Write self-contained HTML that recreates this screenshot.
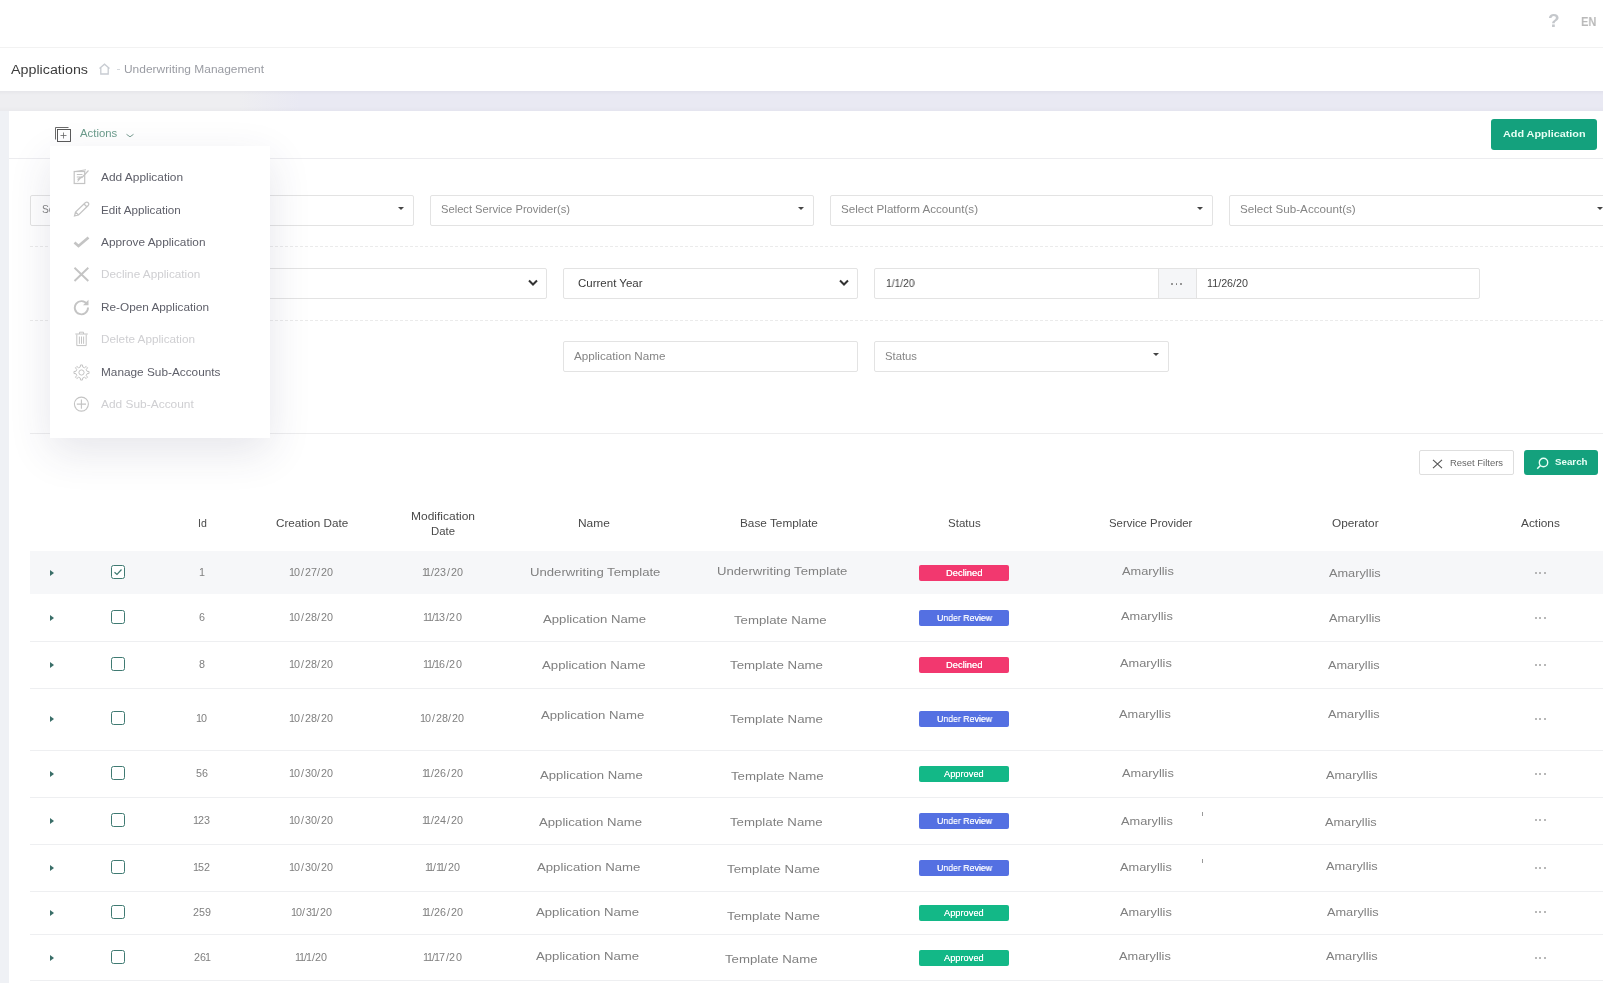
<!DOCTYPE html>
<html><head><meta charset="utf-8"><style>
html,body{margin:0;padding:0;}
body{width:1603px;height:983px;overflow:hidden;position:relative;background:#fff;font-family:"Liberation Sans",sans-serif;}
.t{position:absolute;white-space:nowrap;will-change:transform;}
</style></head><body>
<div style="position:absolute;left:0px;top:91px;width:1603px;height:892px;background:#eff1f5"></div>
<div style="position:absolute;left:0px;top:91px;width:1603px;height:20px;background:linear-gradient(to right,#eeeef1 0,#eeeef1 240px,#e9e9f3 300px,#e9e9f3 100%)"></div>
<div style="position:absolute;left:0px;top:91px;width:1603px;height:20px;background:linear-gradient(rgba(0,0,40,0.035),rgba(0,0,0,0) 20%,rgba(0,0,0,0) 75%,rgba(0,0,30,0.02))"></div>
<div style="position:absolute;left:0px;top:47px;width:1603px;height:1px;background:#f2f2f2"></div>
<div style="position:absolute;left:9px;top:111px;width:1594px;height:872px;background:#fff"></div>
<div class="t" style="left:1548.00px;top:9.41px;font-size:19px;line-height:23px;letter-spacing:0.000px;color:#c5c8cc;font-weight:bold;">?</div>
<div class="t" style="left:1580.80px;top:13.98px;font-size:12.75px;line-height:15px;letter-spacing:0.000px;color:#b9b9b9;font-weight:bold;transform:scaleX(0.8638);transform-origin:0 0;">EN</div>
<div class="t" style="left:11.40px;top:63.37px;font-size:12.5px;line-height:15px;letter-spacing:0.000px;color:#3c3c3c;font-weight:normal;transform:scaleX(1.1425);transform-origin:0 0;">Applications</div>
<svg style="position:absolute;left:98px;top:63px" width="13" height="12" viewBox="0 0 13 12"><path d="M1.5 5.5 L6.5 1.2 L11.5 5.5 M2.8 4.6 V11 H10.2 V4.6" fill="none" stroke="#c8ccd2" stroke-width="1.3"/></svg>
<div style="position:absolute;left:116.5px;top:69px;width:3px;height:1.2px;background:#d5d8dc"></div>
<div class="t" style="left:123.70px;top:64.05px;font-size:10.25px;line-height:12px;letter-spacing:0.000px;color:#9a9ca3;font-weight:normal;transform:scaleX(1.1646);transform-origin:0 0;">Underwriting Management</div>
<div style="position:absolute;left:9px;top:158px;width:1594px;height:1px;background:#ececef"></div>
<svg style="position:absolute;left:54px;top:126px" width="18" height="17" viewBox="0 0 18 17"><path d="M1.5 13.5 V1.5 H14.5" fill="none" stroke="#5a5a5a" stroke-width="0.9"/><rect x="3.5" y="3.5" width="13" height="12" fill="none" stroke="#4a4a4a" stroke-width="0.9"/><path d="M9.5 6.5 V12.5 M6.5 9.5 H12.5" stroke="#666" stroke-width="0.8"/></svg>
<div class="t" style="left:80.30px;top:128.25px;font-size:10.25px;line-height:12px;letter-spacing:0.000px;color:#6c9c8c;font-weight:normal;transform:scaleX(1.1068);transform-origin:0 0;">Actions</div>
<svg style="position:absolute;left:125px;top:132px" width="10" height="7" viewBox="0 0 10 7"><path d="M1.5 2.3 L5 4.8 L8.5 2.3" fill="none" stroke="#7a9e92" stroke-width="1"/></svg>
<div style="position:absolute;left:1491px;top:119px;width:106px;height:31px;background:#14a17d;border-radius:3px"></div>
<div class="t" style="left:1503.00px;top:128.22px;font-size:9.75px;line-height:12px;letter-spacing:0.000px;color:#e9fff6;font-weight:bold;transform:scaleX(1.1091);transform-origin:0 0;">Add Application</div>
<div style="position:absolute;left:30px;top:195px;width:384px;height:31px;box-sizing:border-box;border:1px solid #e3e3e3;border-radius:2px;background:#fff"></div>
<div class="t" style="left:41.50px;top:204.45px;font-size:10.25px;line-height:12px;letter-spacing:0.000px;color:#858585;font-weight:normal;">Se</div>
<div style="position:absolute;left:398px;top:207px;width:0;height:0;border-left:3px solid transparent;border-right:3px solid transparent;border-top:3px solid #444"></div>
<div style="position:absolute;left:430px;top:195px;width:384px;height:31px;box-sizing:border-box;border:1px solid #e3e3e3;border-radius:2px;background:#fff"></div>
<div class="t" style="left:441.20px;top:204.45px;font-size:10.25px;line-height:12px;letter-spacing:0.000px;color:#858585;font-weight:normal;transform:scaleX(1.0888);transform-origin:0 0;">Select Service Provider(s)</div>
<div style="position:absolute;left:798px;top:207px;width:0;height:0;border-left:3px solid transparent;border-right:3px solid transparent;border-top:3px solid #444"></div>
<div style="position:absolute;left:830px;top:195px;width:383px;height:31px;box-sizing:border-box;border:1px solid #e3e3e3;border-radius:2px;background:#fff"></div>
<div class="t" style="left:841.20px;top:204.45px;font-size:10.25px;line-height:12px;letter-spacing:0.000px;color:#858585;font-weight:normal;transform:scaleX(1.1344);transform-origin:0 0;">Select Platform Account(s)</div>
<div style="position:absolute;left:1197px;top:207px;width:0;height:0;border-left:3px solid transparent;border-right:3px solid transparent;border-top:3px solid #444"></div>
<div style="position:absolute;left:1229px;top:195px;width:400px;height:31px;box-sizing:border-box;border:1px solid #e3e3e3;border-radius:2px;background:#fff"></div>
<div class="t" style="left:1240.20px;top:204.45px;font-size:10.25px;line-height:12px;letter-spacing:0.000px;color:#858585;font-weight:normal;transform:scaleX(1.1346);transform-origin:0 0;">Select Sub-Account(s)</div>
<div style="position:absolute;left:1613px;top:207px;width:0;height:0;border-left:3px solid transparent;border-right:3px solid transparent;border-top:3px solid #444"></div>
<div style="position:absolute;left:1597px;top:207px;width:0;height:0;border-left:3px solid transparent;border-right:3px solid transparent;border-top:3px solid #444"></div>
<div style="position:absolute;left:30px;top:246px;width:1573px;height:1px;border-top:1px dashed #ebebeb;box-sizing:border-box"></div>
<div style="position:absolute;left:100px;top:268px;width:447px;height:31px;box-sizing:border-box;border:1px solid #e3e3e3;border-radius:2px;background:#fff"></div>
<svg style="position:absolute;left:528px;top:279px" width="10" height="8" viewBox="0 0 10 8"><path d="M1 1.5 L5 5.5 L9 1.5" fill="none" stroke="#333" stroke-width="2"/></svg>
<div style="position:absolute;left:563px;top:268px;width:295px;height:31px;box-sizing:border-box;border:1px solid #e3e3e3;border-radius:2px;background:#fff"></div>
<div class="t" style="left:577.80px;top:276.77px;font-size:10.75px;line-height:13px;letter-spacing:0.000px;color:#3a3a3a;font-weight:normal;transform:scaleX(1.0703);transform-origin:0 0;">Current Year</div>
<svg style="position:absolute;left:839px;top:279px" width="10" height="8" viewBox="0 0 10 8"><path d="M1 1.5 L5 5.5 L9 1.5" fill="none" stroke="#333" stroke-width="2"/></svg>
<div style="position:absolute;left:874px;top:268px;width:606px;height:31px;box-sizing:border-box;border:1px solid #e3e3e3;border-radius:2px;background:#fff"></div>
<div style="position:absolute;left:1158px;top:269px;width:37px;height:29px;background:#f5f6f8;border-left:1px solid #e3e3e3;border-right:1px solid #e3e3e3"></div>
<div class="t" style="left:885.70px;top:276.77px;font-size:10.75px;line-height:13px;letter-spacing:0.000px;color:#444;font-weight:normal;transform:scaleX(0.9503);transform-origin:0 0;">1/1/20</div>
<div class="t" style="left:1207.00px;top:276.77px;font-size:10.75px;line-height:13px;letter-spacing:0.000px;color:#444;font-weight:normal;transform:scaleX(0.9941);transform-origin:0 0;">11/26/20</div>
<div style="position:absolute;left:1171.0px;top:283px;width:1.6px;height:1.6px;background:#777;border-radius:1px"></div>
<div style="position:absolute;left:1175.5px;top:283px;width:1.6px;height:1.6px;background:#777;border-radius:1px"></div>
<div style="position:absolute;left:1180.0px;top:283px;width:1.6px;height:1.6px;background:#777;border-radius:1px"></div>
<div style="position:absolute;left:30px;top:320px;width:1573px;height:1px;border-top:1px dashed #ebebeb;box-sizing:border-box"></div>
<div style="position:absolute;left:563px;top:341px;width:295px;height:31px;box-sizing:border-box;border:1px solid #e3e3e3;border-radius:2px;background:#fff"></div>
<div class="t" style="left:574.20px;top:350.75px;font-size:10.25px;line-height:12px;letter-spacing:0.000px;color:#858585;font-weight:normal;transform:scaleX(1.1391);transform-origin:0 0;">Application Name</div>
<div style="position:absolute;left:874px;top:341px;width:295px;height:31px;box-sizing:border-box;border:1px solid #e3e3e3;border-radius:2px;background:#fff"></div>
<div class="t" style="left:885.20px;top:350.75px;font-size:10.25px;line-height:12px;letter-spacing:0.000px;color:#858585;font-weight:normal;transform:scaleX(1.1013);transform-origin:0 0;">Status</div>
<div style="position:absolute;left:1153px;top:353px;width:0;height:0;border-left:3px solid transparent;border-right:3px solid transparent;border-top:3px solid #444"></div>
<div style="position:absolute;left:30px;top:433px;width:1573px;height:1px;background:#ededee"></div>
<div style="position:absolute;left:1419px;top:450px;width:95px;height:25px;box-sizing:border-box;border:1px solid #dedede;border-radius:2px;background:#fff"></div>
<svg style="position:absolute;left:1432px;top:459px" width="11" height="10" viewBox="0 0 11 10"><path d="M1 0.8 L10 9.2 M10 0.8 L1 9.2" stroke="#555" stroke-width="1.1"/></svg>
<div class="t" style="left:1450.30px;top:457.87px;font-size:8.75px;line-height:10px;letter-spacing:0.000px;color:#666;font-weight:normal;transform:scaleX(1.0793);transform-origin:0 0;">Reset Filters</div>
<div style="position:absolute;left:1524px;top:450px;width:74px;height:25px;background:#14a17d;border-radius:3px"></div>
<svg style="position:absolute;left:1536px;top:457px" width="13" height="13" viewBox="0 0 13 13"><circle cx="7.5" cy="5.5" r="4.2" fill="none" stroke="#e9fff6" stroke-width="1.4"/><path d="M4.5 8.5 L1.2 11.8" stroke="#e9fff6" stroke-width="1.5"/></svg>
<div class="t" style="left:1554.50px;top:457.19px;font-size:9.25px;line-height:11px;letter-spacing:0.000px;color:#e9fff6;font-weight:bold;transform:scaleX(1.0534);transform-origin:0 0;">Search</div>
<div class="t" style="left:197.60px;top:517.85px;font-size:10.25px;line-height:12px;letter-spacing:0.000px;color:#4a4a4a;font-weight:normal;transform:scaleX(1.0294);transform-origin:0 0;">Id</div>
<div class="t" style="left:275.90px;top:517.85px;font-size:10.25px;line-height:12px;letter-spacing:0.000px;color:#4a4a4a;font-weight:normal;transform:scaleX(1.1417);transform-origin:0 0;">Creation Date</div>
<div class="t" style="left:411.00px;top:510.36px;font-size:10.5px;line-height:13px;letter-spacing:0.000px;color:#4a4a4a;font-weight:normal;transform:scaleX(1.1423);transform-origin:0 0;">Modification</div>
<div class="t" style="left:431.00px;top:525.36px;font-size:10.5px;line-height:13px;letter-spacing:0.000px;color:#4a4a4a;font-weight:normal;transform:scaleX(1.0821);transform-origin:0 0;">Date</div>
<div class="t" style="left:578.10px;top:517.85px;font-size:10.25px;line-height:12px;letter-spacing:0.000px;color:#4a4a4a;font-weight:normal;transform:scaleX(1.1631);transform-origin:0 0;">Name</div>
<div class="t" style="left:740.10px;top:517.85px;font-size:10.25px;line-height:12px;letter-spacing:0.000px;color:#4a4a4a;font-weight:normal;transform:scaleX(1.1507);transform-origin:0 0;">Base Template</div>
<div class="t" style="left:947.65px;top:517.85px;font-size:10.25px;line-height:12px;letter-spacing:0.000px;color:#4a4a4a;font-weight:normal;transform:scaleX(1.1253);transform-origin:0 0;">Status</div>
<div class="t" style="left:1108.50px;top:518.05px;font-size:10.25px;line-height:12px;letter-spacing:0.000px;color:#4a4a4a;font-weight:normal;transform:scaleX(1.1092);transform-origin:0 0;">Service Provider</div>
<div class="t" style="left:1332.40px;top:518.05px;font-size:10.25px;line-height:12px;letter-spacing:0.000px;color:#4a4a4a;font-weight:normal;transform:scaleX(1.1520);transform-origin:0 0;">Operator</div>
<div class="t" style="left:1520.55px;top:518.05px;font-size:10.25px;line-height:12px;letter-spacing:0.000px;color:#4a4a4a;font-weight:normal;transform:scaleX(1.1574);transform-origin:0 0;">Actions</div>
<div style="position:absolute;left:30px;top:551px;width:1573px;height:43px;background:#f6f7f9"></div>
<div style="position:absolute;left:30px;top:641px;width:1573px;height:1px;background:#eeeff1"></div>
<div style="position:absolute;left:30px;top:688px;width:1573px;height:1px;background:#eeeff1"></div>
<div style="position:absolute;left:30px;top:750px;width:1573px;height:1px;background:#eeeff1"></div>
<div style="position:absolute;left:30px;top:797px;width:1573px;height:1px;background:#eeeff1"></div>
<div style="position:absolute;left:30px;top:844px;width:1573px;height:1px;background:#eeeff1"></div>
<div style="position:absolute;left:30px;top:891px;width:1573px;height:1px;background:#eeeff1"></div>
<div style="position:absolute;left:30px;top:934px;width:1573px;height:1px;background:#eeeff1"></div>
<div style="position:absolute;left:30px;top:980px;width:1573px;height:1px;background:#eeeff1"></div>
<div style="position:absolute;left:50px;top:570px;width:0;height:0;border-top:3px solid transparent;border-bottom:3px solid transparent;border-left:4px solid #3a6e68"></div>
<div style="position:absolute;left:111px;top:565px;width:14px;height:14px;box-sizing:border-box;border:1.3px solid #3f7a72;border-radius:2.5px;background:#fff"></div>
<svg style="position:absolute;left:111px;top:565px" width="14" height="14" viewBox="0 0 14 14"><path d="M3.5 7.2 L6 9.5 L10.5 4.5" fill="none" stroke="#3f7a72" stroke-width="1.2"/></svg>
<div class="t" style="left:199.00px;top:565.77px;font-size:10.75px;line-height:13px;color:#808080">1</div>
<div class="t" style="left:289.45px;top:565.77px;font-size:10.75px;line-height:13px;color:#808080">1</div>
<div class="t" style="left:294.40px;top:565.77px;font-size:10.75px;line-height:13px;color:#808080">0</div>
<div class="t" style="left:300.95px;top:565.77px;font-size:10.75px;line-height:13px;color:#808080">/</div>
<div class="t" style="left:304.50px;top:565.77px;font-size:10.75px;line-height:13px;color:#808080">2</div>
<div class="t" style="left:310.80px;top:565.77px;font-size:10.75px;line-height:13px;color:#808080">7</div>
<div class="t" style="left:317.35px;top:565.77px;font-size:10.75px;line-height:13px;color:#808080">/</div>
<div class="t" style="left:320.90px;top:565.77px;font-size:10.75px;line-height:13px;color:#808080">2</div>
<div class="t" style="left:327.20px;top:565.77px;font-size:10.75px;line-height:13px;color:#808080">0</div>
<div class="t" style="left:421.80px;top:565.77px;font-size:10.75px;line-height:13px;color:#808080">1</div>
<div class="t" style="left:425.40px;top:565.77px;font-size:10.75px;line-height:13px;color:#808080">1</div>
<div class="t" style="left:430.60px;top:565.77px;font-size:10.75px;line-height:13px;color:#808080">/</div>
<div class="t" style="left:434.15px;top:565.77px;font-size:10.75px;line-height:13px;color:#808080">2</div>
<div class="t" style="left:440.45px;top:565.77px;font-size:10.75px;line-height:13px;color:#808080">3</div>
<div class="t" style="left:447.00px;top:565.77px;font-size:10.75px;line-height:13px;color:#808080">/</div>
<div class="t" style="left:450.55px;top:565.77px;font-size:10.75px;line-height:13px;color:#808080">2</div>
<div class="t" style="left:456.85px;top:565.77px;font-size:10.75px;line-height:13px;color:#808080">0</div>
<div class="t" style="left:529.60px;top:566.09px;font-size:11.0px;line-height:13px;letter-spacing:0.000px;color:#808080;font-weight:normal;transform:scaleX(1.1938);transform-origin:0 0;">Underwriting Template</div>
<div class="t" style="left:716.80px;top:565.49px;font-size:11.0px;line-height:13px;letter-spacing:0.000px;color:#808080;font-weight:normal;transform:scaleX(1.1938);transform-origin:0 0;">Underwriting Template</div>
<div style="position:absolute;left:919px;top:565px;width:90px;height:16px;background:#f2386f;border-radius:2px"></div>
<div class="t" style="left:945.75px;top:568.18px;font-size:9px;line-height:11px;letter-spacing:0.000px;color:#fff;font-weight:normal;transform:scaleX(1.0423);transform-origin:0 0;text-shadow:0 0 0.4px #fff;">Declined</div>
<div class="t" style="left:1122.20px;top:564.99px;font-size:11.0px;line-height:13px;letter-spacing:0.000px;color:#808080;font-weight:normal;transform:scaleX(1.1612);transform-origin:0 0;">Amaryllis</div>
<div class="t" style="left:1329.00px;top:567.49px;font-size:11.0px;line-height:13px;letter-spacing:0.000px;color:#808080;font-weight:normal;transform:scaleX(1.1589);transform-origin:0 0;">Amaryllis</div>
<div style="position:absolute;left:1535px;top:572px;width:2px;height:2px;background:#a0a0a0;border-radius:1px"></div>
<div style="position:absolute;left:1539px;top:572px;width:2px;height:2px;background:#a0a0a0;border-radius:1px"></div>
<div style="position:absolute;left:1544px;top:572px;width:2px;height:2px;background:#a0a0a0;border-radius:1px"></div>
<div style="position:absolute;left:50px;top:615px;width:0;height:0;border-top:3px solid transparent;border-bottom:3px solid transparent;border-left:4px solid #3a6e68"></div>
<div style="position:absolute;left:111px;top:610px;width:14px;height:14px;box-sizing:border-box;border:1.3px solid #3f7a72;border-radius:2.5px;background:#fff"></div>
<div class="t" style="left:199.00px;top:610.77px;font-size:10.75px;line-height:13px;color:#808080">6</div>
<div class="t" style="left:289.45px;top:610.77px;font-size:10.75px;line-height:13px;color:#808080">1</div>
<div class="t" style="left:294.40px;top:610.77px;font-size:10.75px;line-height:13px;color:#808080">0</div>
<div class="t" style="left:300.95px;top:610.77px;font-size:10.75px;line-height:13px;color:#808080">/</div>
<div class="t" style="left:304.50px;top:610.77px;font-size:10.75px;line-height:13px;color:#808080">2</div>
<div class="t" style="left:310.80px;top:610.77px;font-size:10.75px;line-height:13px;color:#808080">8</div>
<div class="t" style="left:317.35px;top:610.77px;font-size:10.75px;line-height:13px;color:#808080">/</div>
<div class="t" style="left:320.90px;top:610.77px;font-size:10.75px;line-height:13px;color:#808080">2</div>
<div class="t" style="left:327.20px;top:610.77px;font-size:10.75px;line-height:13px;color:#808080">0</div>
<div class="t" style="left:423.15px;top:610.77px;font-size:10.75px;line-height:13px;color:#808080">1</div>
<div class="t" style="left:426.75px;top:610.77px;font-size:10.75px;line-height:13px;color:#808080">1</div>
<div class="t" style="left:431.95px;top:610.77px;font-size:10.75px;line-height:13px;color:#808080">/</div>
<div class="t" style="left:434.15px;top:610.77px;font-size:10.75px;line-height:13px;color:#808080">1</div>
<div class="t" style="left:439.10px;top:610.77px;font-size:10.75px;line-height:13px;color:#808080">3</div>
<div class="t" style="left:445.65px;top:610.77px;font-size:10.75px;line-height:13px;color:#808080">/</div>
<div class="t" style="left:449.20px;top:610.77px;font-size:10.75px;line-height:13px;color:#808080">2</div>
<div class="t" style="left:455.50px;top:610.77px;font-size:10.75px;line-height:13px;color:#808080">0</div>
<div class="t" style="left:542.70px;top:612.89px;font-size:11.0px;line-height:13px;letter-spacing:0.000px;color:#808080;font-weight:normal;transform:scaleX(1.1959);transform-origin:0 0;">Application Name</div>
<div class="t" style="left:733.50px;top:614.09px;font-size:11.0px;line-height:13px;letter-spacing:0.000px;color:#808080;font-weight:normal;transform:scaleX(1.2009);transform-origin:0 0;">Template Name</div>
<div style="position:absolute;left:919px;top:610px;width:90px;height:16px;background:#5470e2;border-radius:2px"></div>
<div class="t" style="left:936.50px;top:613.18px;font-size:9px;line-height:11px;letter-spacing:0.000px;color:#fff;font-weight:normal;transform:scaleX(0.9731);transform-origin:0 0;text-shadow:0 0 0.4px #fff;">Under Review</div>
<div class="t" style="left:1121.20px;top:609.69px;font-size:11.0px;line-height:13px;letter-spacing:0.000px;color:#808080;font-weight:normal;transform:scaleX(1.1612);transform-origin:0 0;">Amaryllis</div>
<div class="t" style="left:1329.10px;top:612.29px;font-size:11.0px;line-height:13px;letter-spacing:0.000px;color:#808080;font-weight:normal;transform:scaleX(1.1589);transform-origin:0 0;">Amaryllis</div>
<div style="position:absolute;left:1535px;top:617px;width:2px;height:2px;background:#a0a0a0;border-radius:1px"></div>
<div style="position:absolute;left:1539px;top:617px;width:2px;height:2px;background:#a0a0a0;border-radius:1px"></div>
<div style="position:absolute;left:1544px;top:617px;width:2px;height:2px;background:#a0a0a0;border-radius:1px"></div>
<div style="position:absolute;left:50px;top:662px;width:0;height:0;border-top:3px solid transparent;border-bottom:3px solid transparent;border-left:4px solid #3a6e68"></div>
<div style="position:absolute;left:111px;top:657px;width:14px;height:14px;box-sizing:border-box;border:1.3px solid #3f7a72;border-radius:2.5px;background:#fff"></div>
<div class="t" style="left:199.00px;top:657.77px;font-size:10.75px;line-height:13px;color:#808080">8</div>
<div class="t" style="left:289.45px;top:657.77px;font-size:10.75px;line-height:13px;color:#808080">1</div>
<div class="t" style="left:294.40px;top:657.77px;font-size:10.75px;line-height:13px;color:#808080">0</div>
<div class="t" style="left:300.95px;top:657.77px;font-size:10.75px;line-height:13px;color:#808080">/</div>
<div class="t" style="left:304.50px;top:657.77px;font-size:10.75px;line-height:13px;color:#808080">2</div>
<div class="t" style="left:310.80px;top:657.77px;font-size:10.75px;line-height:13px;color:#808080">8</div>
<div class="t" style="left:317.35px;top:657.77px;font-size:10.75px;line-height:13px;color:#808080">/</div>
<div class="t" style="left:320.90px;top:657.77px;font-size:10.75px;line-height:13px;color:#808080">2</div>
<div class="t" style="left:327.20px;top:657.77px;font-size:10.75px;line-height:13px;color:#808080">0</div>
<div class="t" style="left:423.15px;top:657.77px;font-size:10.75px;line-height:13px;color:#808080">1</div>
<div class="t" style="left:426.75px;top:657.77px;font-size:10.75px;line-height:13px;color:#808080">1</div>
<div class="t" style="left:431.95px;top:657.77px;font-size:10.75px;line-height:13px;color:#808080">/</div>
<div class="t" style="left:434.15px;top:657.77px;font-size:10.75px;line-height:13px;color:#808080">1</div>
<div class="t" style="left:439.10px;top:657.77px;font-size:10.75px;line-height:13px;color:#808080">6</div>
<div class="t" style="left:445.65px;top:657.77px;font-size:10.75px;line-height:13px;color:#808080">/</div>
<div class="t" style="left:449.20px;top:657.77px;font-size:10.75px;line-height:13px;color:#808080">2</div>
<div class="t" style="left:455.50px;top:657.77px;font-size:10.75px;line-height:13px;color:#808080">0</div>
<div class="t" style="left:541.50px;top:659.09px;font-size:11.0px;line-height:13px;letter-spacing:0.000px;color:#808080;font-weight:normal;transform:scaleX(1.2006);transform-origin:0 0;">Application Name</div>
<div class="t" style="left:730.00px;top:659.09px;font-size:11.0px;line-height:13px;letter-spacing:0.000px;color:#808080;font-weight:normal;transform:scaleX(1.2074);transform-origin:0 0;">Template Name</div>
<div style="position:absolute;left:919px;top:657px;width:90px;height:16px;background:#f2386f;border-radius:2px"></div>
<div class="t" style="left:945.75px;top:660.18px;font-size:9px;line-height:11px;letter-spacing:0.000px;color:#fff;font-weight:normal;transform:scaleX(1.0423);transform-origin:0 0;text-shadow:0 0 0.4px #fff;">Declined</div>
<div class="t" style="left:1119.90px;top:656.69px;font-size:11.0px;line-height:13px;letter-spacing:0.000px;color:#808080;font-weight:normal;transform:scaleX(1.1612);transform-origin:0 0;">Amaryllis</div>
<div class="t" style="left:1328.00px;top:658.99px;font-size:11.0px;line-height:13px;letter-spacing:0.000px;color:#808080;font-weight:normal;transform:scaleX(1.1589);transform-origin:0 0;">Amaryllis</div>
<div style="position:absolute;left:1535px;top:664px;width:2px;height:2px;background:#a0a0a0;border-radius:1px"></div>
<div style="position:absolute;left:1539px;top:664px;width:2px;height:2px;background:#a0a0a0;border-radius:1px"></div>
<div style="position:absolute;left:1544px;top:664px;width:2px;height:2px;background:#a0a0a0;border-radius:1px"></div>
<div style="position:absolute;left:50px;top:716px;width:0;height:0;border-top:3px solid transparent;border-bottom:3px solid transparent;border-left:4px solid #3a6e68"></div>
<div style="position:absolute;left:111px;top:711px;width:14px;height:14px;box-sizing:border-box;border:1.3px solid #3f7a72;border-radius:2.5px;background:#fff"></div>
<div class="t" style="left:195.85px;top:711.77px;font-size:10.75px;line-height:13px;color:#808080">1</div>
<div class="t" style="left:200.80px;top:711.77px;font-size:10.75px;line-height:13px;color:#808080">0</div>
<div class="t" style="left:289.45px;top:711.77px;font-size:10.75px;line-height:13px;color:#808080">1</div>
<div class="t" style="left:294.40px;top:711.77px;font-size:10.75px;line-height:13px;color:#808080">0</div>
<div class="t" style="left:300.95px;top:711.77px;font-size:10.75px;line-height:13px;color:#808080">/</div>
<div class="t" style="left:304.50px;top:711.77px;font-size:10.75px;line-height:13px;color:#808080">2</div>
<div class="t" style="left:310.80px;top:711.77px;font-size:10.75px;line-height:13px;color:#808080">8</div>
<div class="t" style="left:317.35px;top:711.77px;font-size:10.75px;line-height:13px;color:#808080">/</div>
<div class="t" style="left:320.90px;top:711.77px;font-size:10.75px;line-height:13px;color:#808080">2</div>
<div class="t" style="left:327.20px;top:711.77px;font-size:10.75px;line-height:13px;color:#808080">0</div>
<div class="t" style="left:420.45px;top:711.77px;font-size:10.75px;line-height:13px;color:#808080">1</div>
<div class="t" style="left:425.40px;top:711.77px;font-size:10.75px;line-height:13px;color:#808080">0</div>
<div class="t" style="left:431.95px;top:711.77px;font-size:10.75px;line-height:13px;color:#808080">/</div>
<div class="t" style="left:435.50px;top:711.77px;font-size:10.75px;line-height:13px;color:#808080">2</div>
<div class="t" style="left:441.80px;top:711.77px;font-size:10.75px;line-height:13px;color:#808080">8</div>
<div class="t" style="left:448.35px;top:711.77px;font-size:10.75px;line-height:13px;color:#808080">/</div>
<div class="t" style="left:451.90px;top:711.77px;font-size:10.75px;line-height:13px;color:#808080">2</div>
<div class="t" style="left:458.20px;top:711.77px;font-size:10.75px;line-height:13px;color:#808080">0</div>
<div class="t" style="left:540.80px;top:708.89px;font-size:11.0px;line-height:13px;letter-spacing:0.000px;color:#808080;font-weight:normal;transform:scaleX(1.1971);transform-origin:0 0;">Application Name</div>
<div class="t" style="left:730.00px;top:712.89px;font-size:11.0px;line-height:13px;letter-spacing:0.000px;color:#808080;font-weight:normal;transform:scaleX(1.2074);transform-origin:0 0;">Template Name</div>
<div style="position:absolute;left:919px;top:711px;width:90px;height:16px;background:#5470e2;border-radius:2px"></div>
<div class="t" style="left:936.50px;top:714.18px;font-size:9px;line-height:11px;letter-spacing:0.000px;color:#fff;font-weight:normal;transform:scaleX(0.9731);transform-origin:0 0;text-shadow:0 0 0.4px #fff;">Under Review</div>
<div class="t" style="left:1119.00px;top:707.69px;font-size:11.0px;line-height:13px;letter-spacing:0.000px;color:#808080;font-weight:normal;transform:scaleX(1.1612);transform-origin:0 0;">Amaryllis</div>
<div class="t" style="left:1328.00px;top:707.69px;font-size:11.0px;line-height:13px;letter-spacing:0.000px;color:#808080;font-weight:normal;transform:scaleX(1.1589);transform-origin:0 0;">Amaryllis</div>
<div style="position:absolute;left:1535px;top:718px;width:2px;height:2px;background:#a0a0a0;border-radius:1px"></div>
<div style="position:absolute;left:1539px;top:718px;width:2px;height:2px;background:#a0a0a0;border-radius:1px"></div>
<div style="position:absolute;left:1544px;top:718px;width:2px;height:2px;background:#a0a0a0;border-radius:1px"></div>
<div style="position:absolute;left:50px;top:771px;width:0;height:0;border-top:3px solid transparent;border-bottom:3px solid transparent;border-left:4px solid #3a6e68"></div>
<div style="position:absolute;left:111px;top:766px;width:14px;height:14px;box-sizing:border-box;border:1.3px solid #3f7a72;border-radius:2.5px;background:#fff"></div>
<div class="t" style="left:195.85px;top:766.77px;font-size:10.75px;line-height:13px;color:#808080">5</div>
<div class="t" style="left:202.15px;top:766.77px;font-size:10.75px;line-height:13px;color:#808080">6</div>
<div class="t" style="left:289.45px;top:766.77px;font-size:10.75px;line-height:13px;color:#808080">1</div>
<div class="t" style="left:294.40px;top:766.77px;font-size:10.75px;line-height:13px;color:#808080">0</div>
<div class="t" style="left:300.95px;top:766.77px;font-size:10.75px;line-height:13px;color:#808080">/</div>
<div class="t" style="left:304.50px;top:766.77px;font-size:10.75px;line-height:13px;color:#808080">3</div>
<div class="t" style="left:310.80px;top:766.77px;font-size:10.75px;line-height:13px;color:#808080">0</div>
<div class="t" style="left:317.35px;top:766.77px;font-size:10.75px;line-height:13px;color:#808080">/</div>
<div class="t" style="left:320.90px;top:766.77px;font-size:10.75px;line-height:13px;color:#808080">2</div>
<div class="t" style="left:327.20px;top:766.77px;font-size:10.75px;line-height:13px;color:#808080">0</div>
<div class="t" style="left:421.80px;top:766.77px;font-size:10.75px;line-height:13px;color:#808080">1</div>
<div class="t" style="left:425.40px;top:766.77px;font-size:10.75px;line-height:13px;color:#808080">1</div>
<div class="t" style="left:430.60px;top:766.77px;font-size:10.75px;line-height:13px;color:#808080">/</div>
<div class="t" style="left:434.15px;top:766.77px;font-size:10.75px;line-height:13px;color:#808080">2</div>
<div class="t" style="left:440.45px;top:766.77px;font-size:10.75px;line-height:13px;color:#808080">6</div>
<div class="t" style="left:447.00px;top:766.77px;font-size:10.75px;line-height:13px;color:#808080">/</div>
<div class="t" style="left:450.55px;top:766.77px;font-size:10.75px;line-height:13px;color:#808080">2</div>
<div class="t" style="left:456.85px;top:766.77px;font-size:10.75px;line-height:13px;color:#808080">0</div>
<div class="t" style="left:540.30px;top:769.39px;font-size:11.0px;line-height:13px;letter-spacing:0.000px;color:#808080;font-weight:normal;transform:scaleX(1.1913);transform-origin:0 0;">Application Name</div>
<div class="t" style="left:731.00px;top:769.69px;font-size:11.0px;line-height:13px;letter-spacing:0.000px;color:#808080;font-weight:normal;transform:scaleX(1.2022);transform-origin:0 0;">Template Name</div>
<div style="position:absolute;left:919px;top:766px;width:90px;height:16px;background:#13b887;border-radius:2px"></div>
<div class="t" style="left:944.15px;top:769.18px;font-size:9px;line-height:11px;letter-spacing:0.000px;color:#fff;font-weight:normal;transform:scaleX(1.0305);transform-origin:0 0;text-shadow:0 0 0.4px #fff;">Approved</div>
<div class="t" style="left:1121.50px;top:767.19px;font-size:11.0px;line-height:13px;letter-spacing:0.000px;color:#808080;font-weight:normal;transform:scaleX(1.1612);transform-origin:0 0;">Amaryllis</div>
<div class="t" style="left:1326.30px;top:768.69px;font-size:11.0px;line-height:13px;letter-spacing:0.000px;color:#808080;font-weight:normal;transform:scaleX(1.1589);transform-origin:0 0;">Amaryllis</div>
<div style="position:absolute;left:1535px;top:773px;width:2px;height:2px;background:#a0a0a0;border-radius:1px"></div>
<div style="position:absolute;left:1539px;top:773px;width:2px;height:2px;background:#a0a0a0;border-radius:1px"></div>
<div style="position:absolute;left:1544px;top:773px;width:2px;height:2px;background:#a0a0a0;border-radius:1px"></div>
<div style="position:absolute;left:50px;top:818px;width:0;height:0;border-top:3px solid transparent;border-bottom:3px solid transparent;border-left:4px solid #3a6e68"></div>
<div style="position:absolute;left:111px;top:813px;width:14px;height:14px;box-sizing:border-box;border:1.3px solid #3f7a72;border-radius:2.5px;background:#fff"></div>
<div class="t" style="left:192.70px;top:813.77px;font-size:10.75px;line-height:13px;color:#808080">1</div>
<div class="t" style="left:197.65px;top:813.77px;font-size:10.75px;line-height:13px;color:#808080">2</div>
<div class="t" style="left:203.95px;top:813.77px;font-size:10.75px;line-height:13px;color:#808080">3</div>
<div class="t" style="left:289.45px;top:813.77px;font-size:10.75px;line-height:13px;color:#808080">1</div>
<div class="t" style="left:294.40px;top:813.77px;font-size:10.75px;line-height:13px;color:#808080">0</div>
<div class="t" style="left:300.95px;top:813.77px;font-size:10.75px;line-height:13px;color:#808080">/</div>
<div class="t" style="left:304.50px;top:813.77px;font-size:10.75px;line-height:13px;color:#808080">3</div>
<div class="t" style="left:310.80px;top:813.77px;font-size:10.75px;line-height:13px;color:#808080">0</div>
<div class="t" style="left:317.35px;top:813.77px;font-size:10.75px;line-height:13px;color:#808080">/</div>
<div class="t" style="left:320.90px;top:813.77px;font-size:10.75px;line-height:13px;color:#808080">2</div>
<div class="t" style="left:327.20px;top:813.77px;font-size:10.75px;line-height:13px;color:#808080">0</div>
<div class="t" style="left:421.80px;top:813.77px;font-size:10.75px;line-height:13px;color:#808080">1</div>
<div class="t" style="left:425.40px;top:813.77px;font-size:10.75px;line-height:13px;color:#808080">1</div>
<div class="t" style="left:430.60px;top:813.77px;font-size:10.75px;line-height:13px;color:#808080">/</div>
<div class="t" style="left:434.15px;top:813.77px;font-size:10.75px;line-height:13px;color:#808080">2</div>
<div class="t" style="left:440.45px;top:813.77px;font-size:10.75px;line-height:13px;color:#808080">4</div>
<div class="t" style="left:447.00px;top:813.77px;font-size:10.75px;line-height:13px;color:#808080">/</div>
<div class="t" style="left:450.55px;top:813.77px;font-size:10.75px;line-height:13px;color:#808080">2</div>
<div class="t" style="left:456.85px;top:813.77px;font-size:10.75px;line-height:13px;color:#808080">0</div>
<div class="t" style="left:539.10px;top:815.69px;font-size:11.0px;line-height:13px;letter-spacing:0.000px;color:#808080;font-weight:normal;transform:scaleX(1.1959);transform-origin:0 0;">Application Name</div>
<div class="t" style="left:730.40px;top:816.39px;font-size:11.0px;line-height:13px;letter-spacing:0.000px;color:#808080;font-weight:normal;transform:scaleX(1.2022);transform-origin:0 0;">Template Name</div>
<div style="position:absolute;left:919px;top:813px;width:90px;height:16px;background:#5470e2;border-radius:2px"></div>
<div class="t" style="left:936.50px;top:816.18px;font-size:9px;line-height:11px;letter-spacing:0.000px;color:#fff;font-weight:normal;transform:scaleX(0.9731);transform-origin:0 0;text-shadow:0 0 0.4px #fff;">Under Review</div>
<div class="t" style="left:1120.50px;top:814.69px;font-size:11.0px;line-height:13px;letter-spacing:0.000px;color:#808080;font-weight:normal;transform:scaleX(1.1612);transform-origin:0 0;">Amaryllis</div>
<div class="t" style="left:1325.30px;top:815.69px;font-size:11.0px;line-height:13px;letter-spacing:0.000px;color:#808080;font-weight:normal;transform:scaleX(1.1589);transform-origin:0 0;">Amaryllis</div>
<div style="position:absolute;left:1535px;top:819px;width:2px;height:2px;background:#a0a0a0;border-radius:1px"></div>
<div style="position:absolute;left:1539px;top:819px;width:2px;height:2px;background:#a0a0a0;border-radius:1px"></div>
<div style="position:absolute;left:1544px;top:819px;width:2px;height:2px;background:#a0a0a0;border-radius:1px"></div>
<div style="position:absolute;left:50px;top:865px;width:0;height:0;border-top:3px solid transparent;border-bottom:3px solid transparent;border-left:4px solid #3a6e68"></div>
<div style="position:absolute;left:111px;top:860px;width:14px;height:14px;box-sizing:border-box;border:1.3px solid #3f7a72;border-radius:2.5px;background:#fff"></div>
<div class="t" style="left:192.70px;top:860.77px;font-size:10.75px;line-height:13px;color:#808080">1</div>
<div class="t" style="left:197.65px;top:860.77px;font-size:10.75px;line-height:13px;color:#808080">5</div>
<div class="t" style="left:203.95px;top:860.77px;font-size:10.75px;line-height:13px;color:#808080">2</div>
<div class="t" style="left:289.45px;top:860.77px;font-size:10.75px;line-height:13px;color:#808080">1</div>
<div class="t" style="left:294.40px;top:860.77px;font-size:10.75px;line-height:13px;color:#808080">0</div>
<div class="t" style="left:300.95px;top:860.77px;font-size:10.75px;line-height:13px;color:#808080">/</div>
<div class="t" style="left:304.50px;top:860.77px;font-size:10.75px;line-height:13px;color:#808080">3</div>
<div class="t" style="left:310.80px;top:860.77px;font-size:10.75px;line-height:13px;color:#808080">0</div>
<div class="t" style="left:317.35px;top:860.77px;font-size:10.75px;line-height:13px;color:#808080">/</div>
<div class="t" style="left:320.90px;top:860.77px;font-size:10.75px;line-height:13px;color:#808080">2</div>
<div class="t" style="left:327.20px;top:860.77px;font-size:10.75px;line-height:13px;color:#808080">0</div>
<div class="t" style="left:424.50px;top:860.77px;font-size:10.75px;line-height:13px;color:#808080">1</div>
<div class="t" style="left:428.10px;top:860.77px;font-size:10.75px;line-height:13px;color:#808080">1</div>
<div class="t" style="left:433.30px;top:860.77px;font-size:10.75px;line-height:13px;color:#808080">/</div>
<div class="t" style="left:435.50px;top:860.77px;font-size:10.75px;line-height:13px;color:#808080">1</div>
<div class="t" style="left:439.10px;top:860.77px;font-size:10.75px;line-height:13px;color:#808080">1</div>
<div class="t" style="left:444.30px;top:860.77px;font-size:10.75px;line-height:13px;color:#808080">/</div>
<div class="t" style="left:447.85px;top:860.77px;font-size:10.75px;line-height:13px;color:#808080">2</div>
<div class="t" style="left:454.15px;top:860.77px;font-size:10.75px;line-height:13px;color:#808080">0</div>
<div class="t" style="left:536.70px;top:861.49px;font-size:11.0px;line-height:13px;letter-spacing:0.000px;color:#808080;font-weight:normal;transform:scaleX(1.1983);transform-origin:0 0;">Application Name</div>
<div class="t" style="left:727.00px;top:862.69px;font-size:11.0px;line-height:13px;letter-spacing:0.000px;color:#808080;font-weight:normal;transform:scaleX(1.2074);transform-origin:0 0;">Template Name</div>
<div style="position:absolute;left:919px;top:860px;width:90px;height:16px;background:#5470e2;border-radius:2px"></div>
<div class="t" style="left:936.50px;top:863.18px;font-size:9px;line-height:11px;letter-spacing:0.000px;color:#fff;font-weight:normal;transform:scaleX(0.9731);transform-origin:0 0;text-shadow:0 0 0.4px #fff;">Under Review</div>
<div class="t" style="left:1120.00px;top:860.69px;font-size:11.0px;line-height:13px;letter-spacing:0.000px;color:#808080;font-weight:normal;transform:scaleX(1.1612);transform-origin:0 0;">Amaryllis</div>
<div class="t" style="left:1326.30px;top:859.69px;font-size:11.0px;line-height:13px;letter-spacing:0.000px;color:#808080;font-weight:normal;transform:scaleX(1.1589);transform-origin:0 0;">Amaryllis</div>
<div style="position:absolute;left:1535px;top:867px;width:2px;height:2px;background:#a0a0a0;border-radius:1px"></div>
<div style="position:absolute;left:1539px;top:867px;width:2px;height:2px;background:#a0a0a0;border-radius:1px"></div>
<div style="position:absolute;left:1544px;top:867px;width:2px;height:2px;background:#a0a0a0;border-radius:1px"></div>
<div style="position:absolute;left:50px;top:910px;width:0;height:0;border-top:3px solid transparent;border-bottom:3px solid transparent;border-left:4px solid #3a6e68"></div>
<div style="position:absolute;left:111px;top:905px;width:14px;height:14px;box-sizing:border-box;border:1.3px solid #3f7a72;border-radius:2.5px;background:#fff"></div>
<div class="t" style="left:192.70px;top:905.77px;font-size:10.75px;line-height:13px;color:#808080">2</div>
<div class="t" style="left:199.00px;top:905.77px;font-size:10.75px;line-height:13px;color:#808080">5</div>
<div class="t" style="left:205.30px;top:905.77px;font-size:10.75px;line-height:13px;color:#808080">9</div>
<div class="t" style="left:290.80px;top:905.77px;font-size:10.75px;line-height:13px;color:#808080">1</div>
<div class="t" style="left:295.75px;top:905.77px;font-size:10.75px;line-height:13px;color:#808080">0</div>
<div class="t" style="left:302.30px;top:905.77px;font-size:10.75px;line-height:13px;color:#808080">/</div>
<div class="t" style="left:305.85px;top:905.77px;font-size:10.75px;line-height:13px;color:#808080">3</div>
<div class="t" style="left:310.80px;top:905.77px;font-size:10.75px;line-height:13px;color:#808080">1</div>
<div class="t" style="left:316.00px;top:905.77px;font-size:10.75px;line-height:13px;color:#808080">/</div>
<div class="t" style="left:319.55px;top:905.77px;font-size:10.75px;line-height:13px;color:#808080">2</div>
<div class="t" style="left:325.85px;top:905.77px;font-size:10.75px;line-height:13px;color:#808080">0</div>
<div class="t" style="left:421.80px;top:905.77px;font-size:10.75px;line-height:13px;color:#808080">1</div>
<div class="t" style="left:425.40px;top:905.77px;font-size:10.75px;line-height:13px;color:#808080">1</div>
<div class="t" style="left:430.60px;top:905.77px;font-size:10.75px;line-height:13px;color:#808080">/</div>
<div class="t" style="left:434.15px;top:905.77px;font-size:10.75px;line-height:13px;color:#808080">2</div>
<div class="t" style="left:440.45px;top:905.77px;font-size:10.75px;line-height:13px;color:#808080">6</div>
<div class="t" style="left:447.00px;top:905.77px;font-size:10.75px;line-height:13px;color:#808080">/</div>
<div class="t" style="left:450.55px;top:905.77px;font-size:10.75px;line-height:13px;color:#808080">2</div>
<div class="t" style="left:456.85px;top:905.77px;font-size:10.75px;line-height:13px;color:#808080">0</div>
<div class="t" style="left:535.60px;top:906.49px;font-size:11.0px;line-height:13px;letter-spacing:0.000px;color:#808080;font-weight:normal;transform:scaleX(1.1959);transform-origin:0 0;">Application Name</div>
<div class="t" style="left:727.00px;top:909.69px;font-size:11.0px;line-height:13px;letter-spacing:0.000px;color:#808080;font-weight:normal;transform:scaleX(1.2074);transform-origin:0 0;">Template Name</div>
<div style="position:absolute;left:919px;top:905px;width:90px;height:16px;background:#13b887;border-radius:2px"></div>
<div class="t" style="left:944.15px;top:908.18px;font-size:9px;line-height:11px;letter-spacing:0.000px;color:#fff;font-weight:normal;transform:scaleX(1.0305);transform-origin:0 0;text-shadow:0 0 0.4px #fff;">Approved</div>
<div class="t" style="left:1120.00px;top:905.69px;font-size:11.0px;line-height:13px;letter-spacing:0.000px;color:#808080;font-weight:normal;transform:scaleX(1.1612);transform-origin:0 0;">Amaryllis</div>
<div class="t" style="left:1327.30px;top:905.69px;font-size:11.0px;line-height:13px;letter-spacing:0.000px;color:#808080;font-weight:normal;transform:scaleX(1.1589);transform-origin:0 0;">Amaryllis</div>
<div style="position:absolute;left:1535px;top:911px;width:2px;height:2px;background:#a0a0a0;border-radius:1px"></div>
<div style="position:absolute;left:1539px;top:911px;width:2px;height:2px;background:#a0a0a0;border-radius:1px"></div>
<div style="position:absolute;left:1544px;top:911px;width:2px;height:2px;background:#a0a0a0;border-radius:1px"></div>
<div style="position:absolute;left:50px;top:955px;width:0;height:0;border-top:3px solid transparent;border-bottom:3px solid transparent;border-left:4px solid #3a6e68"></div>
<div style="position:absolute;left:111px;top:950px;width:14px;height:14px;box-sizing:border-box;border:1.3px solid #3f7a72;border-radius:2.5px;background:#fff"></div>
<div class="t" style="left:194.05px;top:950.77px;font-size:10.75px;line-height:13px;color:#808080">2</div>
<div class="t" style="left:200.35px;top:950.77px;font-size:10.75px;line-height:13px;color:#808080">6</div>
<div class="t" style="left:205.30px;top:950.77px;font-size:10.75px;line-height:13px;color:#808080">1</div>
<div class="t" style="left:295.30px;top:950.77px;font-size:10.75px;line-height:13px;color:#808080">1</div>
<div class="t" style="left:298.90px;top:950.77px;font-size:10.75px;line-height:13px;color:#808080">1</div>
<div class="t" style="left:304.10px;top:950.77px;font-size:10.75px;line-height:13px;color:#808080">/</div>
<div class="t" style="left:306.30px;top:950.77px;font-size:10.75px;line-height:13px;color:#808080">1</div>
<div class="t" style="left:311.50px;top:950.77px;font-size:10.75px;line-height:13px;color:#808080">/</div>
<div class="t" style="left:315.05px;top:950.77px;font-size:10.75px;line-height:13px;color:#808080">2</div>
<div class="t" style="left:321.35px;top:950.77px;font-size:10.75px;line-height:13px;color:#808080">0</div>
<div class="t" style="left:423.15px;top:950.77px;font-size:10.75px;line-height:13px;color:#808080">1</div>
<div class="t" style="left:426.75px;top:950.77px;font-size:10.75px;line-height:13px;color:#808080">1</div>
<div class="t" style="left:431.95px;top:950.77px;font-size:10.75px;line-height:13px;color:#808080">/</div>
<div class="t" style="left:434.15px;top:950.77px;font-size:10.75px;line-height:13px;color:#808080">1</div>
<div class="t" style="left:439.10px;top:950.77px;font-size:10.75px;line-height:13px;color:#808080">7</div>
<div class="t" style="left:445.65px;top:950.77px;font-size:10.75px;line-height:13px;color:#808080">/</div>
<div class="t" style="left:449.20px;top:950.77px;font-size:10.75px;line-height:13px;color:#808080">2</div>
<div class="t" style="left:455.50px;top:950.77px;font-size:10.75px;line-height:13px;color:#808080">0</div>
<div class="t" style="left:535.60px;top:950.39px;font-size:11.0px;line-height:13px;letter-spacing:0.000px;color:#808080;font-weight:normal;transform:scaleX(1.1959);transform-origin:0 0;">Application Name</div>
<div class="t" style="left:725.20px;top:952.69px;font-size:11.0px;line-height:13px;letter-spacing:0.000px;color:#808080;font-weight:normal;transform:scaleX(1.2009);transform-origin:0 0;">Template Name</div>
<div style="position:absolute;left:919px;top:950px;width:90px;height:16px;background:#13b887;border-radius:2px"></div>
<div class="t" style="left:944.15px;top:953.18px;font-size:9px;line-height:11px;letter-spacing:0.000px;color:#fff;font-weight:normal;transform:scaleX(1.0305);transform-origin:0 0;text-shadow:0 0 0.4px #fff;">Approved</div>
<div class="t" style="left:1119.00px;top:949.69px;font-size:11.0px;line-height:13px;letter-spacing:0.000px;color:#808080;font-weight:normal;transform:scaleX(1.1612);transform-origin:0 0;">Amaryllis</div>
<div class="t" style="left:1326.30px;top:949.69px;font-size:11.0px;line-height:13px;letter-spacing:0.000px;color:#808080;font-weight:normal;transform:scaleX(1.1589);transform-origin:0 0;">Amaryllis</div>
<div style="position:absolute;left:1535px;top:957px;width:2px;height:2px;background:#a0a0a0;border-radius:1px"></div>
<div style="position:absolute;left:1539px;top:957px;width:2px;height:2px;background:#a0a0a0;border-radius:1px"></div>
<div style="position:absolute;left:1544px;top:957px;width:2px;height:2px;background:#a0a0a0;border-radius:1px"></div>
<div style="position:absolute;left:1202px;top:812px;width:1px;height:4px;background:#999"></div>
<div style="position:absolute;left:1202px;top:859px;width:1px;height:4px;background:#999"></div>
<div style="position:absolute;left:50px;top:146px;width:220px;height:292px;background:#fff;box-shadow:0 14px 40px rgba(50,50,90,0.12)"></div>
<div class="t" style="left:101.00px;top:171.07px;font-size:10.75px;line-height:13px;letter-spacing:0.000px;color:#5e5f69;font-weight:normal;transform:scaleX(1.1078);transform-origin:0 0;">Add Application</div>
<svg style="position:absolute;left:73px;top:168.8px" width="17" height="17" viewBox="0 0 17 17"><rect x="1.2" y="2.5" width="10.5" height="12" fill="none" stroke="#c4c4c4" stroke-width="1.2"/><path d="M3.8 5.5 H9.5 M3.8 8 H9 M4.5 10.5 L9 7.5 L4.5 12.5 M8.5 9 L15.5 1.5 M2.5 2.5 L13 0.8" fill="none" stroke="#c4c4c4" stroke-width="1.1"/></svg>
<div class="t" style="left:101.00px;top:203.54px;font-size:10.75px;line-height:13px;letter-spacing:0.000px;color:#5e5f69;font-weight:normal;transform:scaleX(1.0843);transform-origin:0 0;">Edit Application</div>
<svg style="position:absolute;left:73px;top:201.3px" width="17" height="17" viewBox="0 0 17 17"><path d="M1.5 15 L2.5 11 L12.5 1.5 Q14 0.5 15.3 1.8 Q16.3 3 15.2 4.5 L5.5 14 Z M11 3 L14 6 M2.5 11 L5.5 14" fill="none" stroke="#c4c4c4" stroke-width="1.25"/></svg>
<div class="t" style="left:101.00px;top:236.01px;font-size:10.75px;line-height:13px;letter-spacing:0.000px;color:#5e5f69;font-weight:normal;transform:scaleX(1.0998);transform-origin:0 0;">Approve Application</div>
<svg style="position:absolute;left:73px;top:233.7px" width="17" height="17" viewBox="0 0 17 17"><path d="M1.5 8.5 L5.5 12 L15.5 3.5" fill="none" stroke="#c4c4c4" stroke-width="2.7"/></svg>
<div class="t" style="left:101.00px;top:268.48px;font-size:10.75px;line-height:13px;letter-spacing:0.000px;color:#cfcfd2;font-weight:normal;transform:scaleX(1.0932);transform-origin:0 0;">Decline Application</div>
<svg style="position:absolute;left:73px;top:266.2px" width="17" height="17" viewBox="0 0 17 17"><path d="M1.5 1.8 L15.3 15 M15.3 1.8 L1.5 15" fill="none" stroke="#c4c4c4" stroke-width="1.9"/></svg>
<div class="t" style="left:101.00px;top:300.95px;font-size:10.75px;line-height:13px;letter-spacing:0.000px;color:#5e5f69;font-weight:normal;transform:scaleX(1.0954);transform-origin:0 0;">Re-Open Application</div>
<svg style="position:absolute;left:73px;top:298.7px" width="17" height="17" viewBox="0 0 17 17"><path d="M14 5.2 A6.6 6.6 0 1 0 15 8.5" fill="none" stroke="#c4c4c4" stroke-width="1.9"/><path d="M10 6.2 L15.5 6.2 L15.5 0.8 Z" fill="#c4c4c4"/></svg>
<div class="t" style="left:101.00px;top:333.42px;font-size:10.75px;line-height:13px;letter-spacing:0.000px;color:#cfcfd2;font-weight:normal;transform:scaleX(1.0923);transform-origin:0 0;">Delete Application</div>
<svg style="position:absolute;left:73px;top:331.1px" width="17" height="17" viewBox="0 0 17 17"><path d="M2.3 3 H14.8 M6.5 3 V1.2 H10.5 V3 M3.8 3.5 V14.6 H13.2 V3.5 M6.4 5.5 V12.8 M8.5 5.5 V12.8 M10.6 5.5 V12.8" fill="none" stroke="#c4c4c4" stroke-width="1"/></svg>
<div class="t" style="left:101.00px;top:365.89px;font-size:10.75px;line-height:13px;letter-spacing:0.000px;color:#5e5f69;font-weight:normal;transform:scaleX(1.0988);transform-origin:0 0;">Manage Sub-Accounts</div>
<svg style="position:absolute;left:73px;top:363.6px" width="17" height="17" viewBox="0 0 17 17"><path d="M13.97 7.28 L16.04 7.51 L16.04 9.49 L13.97 9.72 L13.23 11.50 L14.53 13.13 L13.13 14.53 L11.50 13.23 L9.72 13.97 L9.49 16.04 L7.51 16.04 L7.28 13.97 L5.50 13.23 L3.87 14.53 L2.47 13.13 L3.77 11.50 L3.03 9.72 L0.96 9.49 L0.96 7.51 L3.03 7.28 L3.77 5.50 L2.47 3.87 L3.87 2.47 L5.50 3.77 L7.28 3.03 L7.51 0.96 L9.49 0.96 L9.72 3.03 L11.50 3.77 L13.13 2.47 L14.53 3.87 L13.23 5.50 Z" fill="none" stroke="#c4c4c4" stroke-width="1"/><circle cx="8.5" cy="8.5" r="2.6" fill="none" stroke="#c4c4c4" stroke-width="1"/></svg>
<div class="t" style="left:101.00px;top:398.36px;font-size:10.75px;line-height:13px;letter-spacing:0.000px;color:#cfcfd2;font-weight:normal;transform:scaleX(1.1093);transform-origin:0 0;">Add Sub-Account</div>
<svg style="position:absolute;left:73px;top:396.1px" width="17" height="17" viewBox="0 0 17 17"><circle cx="8.4" cy="8.1" r="7" fill="none" stroke="#c4c4c4" stroke-width="1.1"/><path d="M8.4 3.5 V12.7 M3.8 8.1 H13" stroke="#c4c4c4" stroke-width="1.1"/></svg>
</body></html>
